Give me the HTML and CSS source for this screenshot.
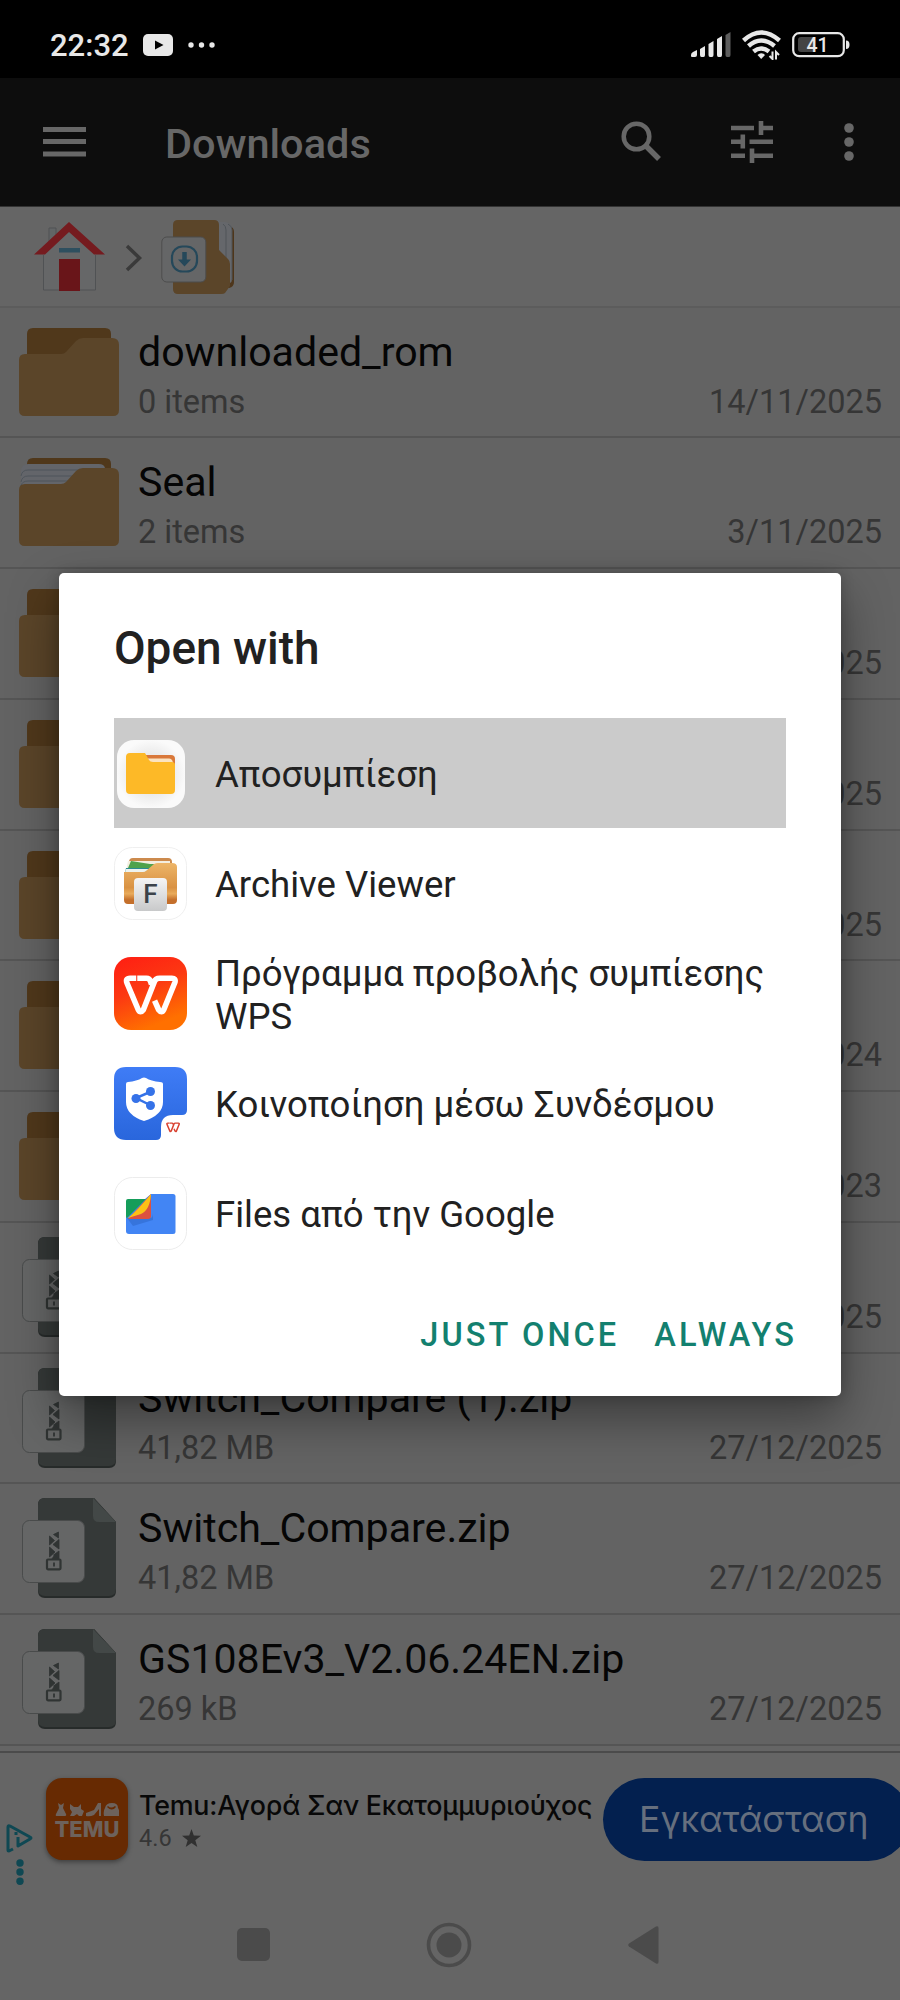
FILE: index.html
```
<!DOCTYPE html>
<html lang="el">
<head>
    <meta charset="UTF-8">
    <meta name="viewport" content="width=device-width, initial-scale=1.0">
    <title>Downloads</title>
    <link rel="stylesheet" href="styles.css">
</head>
<body>
    <!-- Shared icons -->
    <svg class="defs" width="0" height="0">
        <symbol id="folder" viewBox="0 0 100 88">
            <path d="M8 30V6q0-6 6-6h72q6 0 6 6v20z" fill="#50381b"/>
            <path d="M0 32q0-6 6-6h36q3 0 5-2l10-11q3-3 7-3h29q7 0 7 7v65q0 6-6 6H6q-6 0-6-6z" fill="#5b4529"/>
        </symbol>
        <symbol id="folder-full" viewBox="0 0 100 88">
            <path d="M8 30V6q0-6 6-6h72q6 0 6 6v20z" fill="#50381b"/>
            <path d="M2 30V14q0-8 7-8h71q5 0 6 4v22z" fill="#63656a"/>
            <path d="M2 18q1-6 7-6h62M2 24q1-6 7-6h52M2 28q1-5 7-5h46" fill="none" stroke="#4f555b" stroke-width="1"/>
            <path d="M0 32q0-6 6-6h36q3 0 5-2l10-11q3-3 7-3h29q7 0 7 7v65q0 6-6 6H6q-6 0-6-6z" fill="#5b4529"/>
        </symbol>
        <symbol id="zip" viewBox="0 0 94 100">
            <path d="M16 7q0-7 7-7h49l22 24v69q0 7-7 7H23q-7 0-7-7z" fill="#272b2a"/>
            <path d="M16 7q0-7 7-7h49l22 24v67q0 7-7 7H23q-7 0-7-7z" fill="#353938"/>
            <path d="M71 0l23 24H77q-6 0-6-6z" fill="#434847"/>
            <rect x=".5" y="22.500" width="62" height="62" rx="7" fill="#656666" stroke="#494b4b"/>
            <g fill="#303433" stroke="#303433" stroke-width=".8">
                <path d="M31.500 36.500l5-2.500v6zM27.500 38l5 4.500-5 4.500zM37 41.500v9.500l-6-4.500zM27.500 49l5.500 5-5.500 5zM37 53v8l-5.500-4zM29.500 61.500l3.500-5 4 5z"/>
            </g>
            <rect x="25" y="61.500" width="13.500" height="9.800" rx="1" fill="none" stroke="#303433" stroke-width="2.200"/>
            <path d="M32 64.500v4" stroke="#303433" stroke-width="1.800"/>
        </symbol>
        <symbol id="wps" viewBox="0 0 54 40">
            <path d="M13 3H7Q2 3 4 8l11 26q2 4 5 0L31 6q1-3 5-3h12q4 0 3 4L40 34q-2 4-5 0l-4-9M14 3h9q3 0 4 3l1 3" fill="none" stroke="currentColor" stroke-width="5.500" stroke-linejoin="round"/>
        </symbol>
    </svg>

    <div class="screen">
        <div class="status-bar">
            <span class="time">22:32</span>
            <svg class="youtube" width="30" height="22" viewBox="0 0 30 22"><rect width="30" height="22" rx="5" fill="#e8e8e8"/><path d="M12 6.500l8.500 4.500-8.500 4.500z" fill="#000"/></svg>
            <svg width="28" height="6" viewBox="0 0 28 6" fill="#e8e8e8"><circle cx="3" cy="3" r="2.700"/><circle cx="13.500" cy="3" r="2.700"/><circle cx="24" cy="3" r="2.700"/></svg>
            <div class="status-right">
                <svg width="40" height="26" viewBox="0 0 40 26" fill="#e8e8e8">
                    <path d="M0 23q0-2 2-3l4-2v5q0 2-2 2H1q-1 0-1-1zM9 17l5-3v9q0 2-1.500 2h-2Q9 25 9 23zM17.500 12l5-3v14q0 2-1.500 2h-2q-1.500 0-1.500-2zM26 7l5-3v19q0 2-1.500 2h-2Q26 25 26 23z"/>
                    <path d="M34.500 3l5-3v23q0 2-1.500 2h-2q-1.500 0-1.500-2z" fill="#5c5c5c"/>
                </svg>
                <svg class="wifi" width="39" height="30" viewBox="0 0 39 30" fill="none" stroke="#e8e8e8" stroke-width="4.500">
                    <path d="M1.500 10.500q17.500-16 36 0M6.500 16q12.500-11 26 0M11.500 21.500q7.500-6 15.500 0"/>
                    <path d="M15.500 25q3.500-3.500 7.500 0l-3.800 4z" fill="#e8e8e8" stroke="none"/>
                    <path d="M30.500 21.500v7.500l-3-3M34 29.500V22l3 3" stroke-width="2"/>
                </svg>
                <svg width="58" height="26" viewBox="0 0 58 26">
                    <rect x="1.200" y="1.200" width="50.600" height="23" rx="6" fill="none" stroke="#e8e8e8" stroke-width="2.200"/>
                    <path d="M6 8q0-3 3-3h14v15H9q-3 0-3-3z" fill="#444"/>
                    <path d="M54 8.500q3.500 0 3.500 4.200T54 17z" fill="#e8e8e8"/>
                    <text class="battery" x="25.500" y="19.800" text-anchor="middle">41</text>
                </svg>
            </div>
        </div>

        <div class="app-bar">
            <svg class="menu" width="43" height="30" viewBox="0 0 43 30" fill="#676767"><path d="M0 0h43v5H0zM0 12h43v5H0zM0 24.500h43v5H0z"/></svg>
            <h1>Downloads</h1>
            <svg class="search" width="42" height="42" viewBox="0 0 42 42" fill="none" stroke="#676767"><circle cx="15.500" cy="15.500" r="12.800" stroke-width="4.500"/><path d="M25.500 25.500L38 38" stroke-width="5.500"/></svg>
            <svg class="tune" width="42" height="42" viewBox="0 0 42 42" fill="none" stroke="#676767" stroke-width="4.600"><path d="M0 7h23M28 7h14M30 0v14M0 20.800h14M18.500 20.800H42M11.800 13.500v14M0 34.700h14M21 34.700h21M21 27.500v14.500"/></svg>
            <svg class="more" width="10" height="38" viewBox="0 0 10 38" fill="#676767"><circle cx="5" cy="5" r="4.800"/><circle cx="5" cy="19" r="4.800"/><circle cx="5" cy="33" r="4.800"/></svg>
        </div>

        <div class="breadcrumb">
            <svg class="home" width="71" height="70" viewBox="0 0 71 70">
                <path d="M15 26V6h7v14" fill="#626566" stroke="#515355"/>
                <path d="M9 32L35 8l27 24v36H9z" fill="#666768"/>
                <path d="M9.500 33v35h52V33" fill="none" stroke="#505254"/>
                <path d="M0 32.500L35 0l36 32.500H60L35 10 11 32.500z" fill="#751b1f"/>
                <path d="M25 26h21v4.500H25z" fill="#2e4f5f"/>
                <path d="M25 37h21v32H25z" fill="#691519"/>
            </svg>
            <svg class="chevron" width="18" height="28" viewBox="0 0 18 28" fill="none" stroke="#3a3a3a" stroke-width="3.500"><path d="M2 2l12.500 12L2 26"/></svg>
            <svg width="74" height="74" viewBox="0 0 74 74">
                <path d="M56 6h12q5 1 5 6v50q0 5-5 6H56z" fill="#4e361b"/>
                <path d="M55 2h9q7 1 7 7v50q0 3-2 4H55z" fill="#65676b"/>
                <path d="M62 4q3 2 3 6v30M67 4q4 2 4 6v50" fill="none" stroke="#505559"/>
                <path d="M12 5q0-5 5-5h36q5 0 5 5v25l9 9q2 2 2 5v22l-5 7q-1 1-4 1H17q-5 0-5-5z" fill="#5b4529"/>
                <rect x=".8" y="17" width="44" height="45" rx="5" fill="#656667" stroke="#4d4d4d"/>
                <rect x="11" y="26.500" width="25" height="25" rx="10.500" fill="none" stroke="#25485a" stroke-width="2.200"/>
                <path d="M23.500 32v11" stroke="#25485a" stroke-width="4.500"/><path d="M17 39.500l6.500 7 6.500-7z" fill="#25485a"/>
            </svg>
        </div>

        <div class="file-list">
            <div class="row">
                <svg class="icon-folder"><use href="#folder"/></svg>
                <div class="info"><p class="name">downloaded_rom</p><p class="meta"><span>0 items</span><span>14/11/2025</span></p></div>
            </div>
            <div class="row">
                <svg class="icon-folder"><use href="#folder-full"/></svg>
                <div class="info"><p class="name">Seal</p><p class="meta"><span>2 items</span><span>3/11/2025</span></p></div>
            </div>
            <div class="row">
                <svg class="icon-folder"><use href="#folder"/></svg>
                <div class="info"><p class="name"></p><p class="meta"><span></span><span>2025</span></p></div>
            </div>
            <div class="row">
                <svg class="icon-folder"><use href="#folder"/></svg>
                <div class="info"><p class="name"></p><p class="meta"><span></span><span>2025</span></p></div>
            </div>
            <div class="row">
                <svg class="icon-folder"><use href="#folder"/></svg>
                <div class="info"><p class="name"></p><p class="meta"><span></span><span>2025</span></p></div>
            </div>
            <div class="row">
                <svg class="icon-folder"><use href="#folder"/></svg>
                <div class="info"><p class="name"></p><p class="meta"><span></span><span>2024</span></p></div>
            </div>
            <div class="row">
                <svg class="icon-folder"><use href="#folder"/></svg>
                <div class="info"><p class="name"></p><p class="meta"><span></span><span>2023</span></p></div>
            </div>
            <div class="row">
                <svg class="icon-zip"><use href="#zip"/></svg>
                <div class="info"><p class="name"></p><p class="meta"><span></span><span>2025</span></p></div>
            </div>
            <div class="row">
                <svg class="icon-zip"><use href="#zip"/></svg>
                <div class="info"><p class="name">Switch_Compare (1).zip</p><p class="meta"><span>41,82 MB</span><span>27/12/2025</span></p></div>
            </div>
            <div class="row">
                <svg class="icon-zip"><use href="#zip"/></svg>
                <div class="info"><p class="name">Switch_Compare.zip</p><p class="meta"><span>41,82 MB</span><span>27/12/2025</span></p></div>
            </div>
            <div class="row">
                <svg class="icon-zip"><use href="#zip"/></svg>
                <div class="info"><p class="name">GS108Ev3_V2.06.24EN.zip</p><p class="meta"><span>269 kB</span><span>27/12/2025</span></p></div>
            </div>
        </div>

        <div class="ad">
            <div class="ad-choices">
                <svg width="27" height="29" viewBox="0 0 27 29" fill="none" stroke="#0f4853" stroke-width="3"><path d="M7 25l-4 2q-1 0-1-1V3q0-2 2-1l20 11q2 1 0 2L12 22v-9" stroke-linejoin="round"/><path d="M10 8v3" /></svg>
                <svg width="8" height="27" viewBox="0 0 8 27" fill="#0f4853"><circle cx="4" cy="4" r="3.700"/><circle cx="4" cy="13" r="3.700"/><circle cx="4" cy="22.300" r="3.700"/></svg>
            </div>
            <div class="temu">
                <svg width="64" height="14" viewBox="0 0 64 14" fill="#6d625c">
                    <path d="M3 0l3 2 3-2-1 5 3 6q1 2-2 2H2q-2 0-1-2l3-6z"/>
                    <path d="M15 1l4 3h4l3-3v5l3 2-2 5h-3l-2-2-3 2h-4l2-4-2-3z"/>
                    <path d="M31 10l8-3 4-7h3v13h-2V6l-5 6q-4 2-8 1z"/>
                    <path fill-rule="evenodd" d="M49 13q-1-5 1-8 1-5 7-5t6 5q2 3 1 8zM52 4q5 5 9 0l-1-1q-4 3-7 0z"/>
                </svg>
                <span>TEMU</span>
            </div>
            <div class="ad-text">
                <p class="ad-title">Temu:Αγορά Σαν Εκατομμυριούχος</p>
                <p class="ad-rating">4.6 <svg width="19" height="18" viewBox="0 0 19 18" fill="#303030"><path d="M9.500 0l2.300 6.600 7.200.2-5.700 4.400 2 6.800-5.800-4-5.800 4 2-6.800L0 6.800l7.200-.2z"/></svg></p>
            </div>
            <div class="install">Εγκατάσταση</div>
        </div>

        <div class="nav-bar">
            <svg width="33" height="33" viewBox="0 0 33 33"><rect width="33" height="33" rx="5" fill="#4b4b4b"/></svg>
            <svg width="46" height="46" viewBox="0 0 46 46"><circle cx="23" cy="23" r="20.500" fill="none" stroke="#4b4b4b" stroke-width="3.600"/><circle cx="23" cy="23" r="12.500" fill="#4b4b4b"/></svg>
            <svg width="31" height="38" viewBox="0 0 31 38"><path d="M1 17.500L28 .5q2.500-1 2.500 1.500v34q0 2.500-2.500 1.500L1 20.500q-1.500-1.500 0-3z" fill="#4b4b4b"/></svg>
        </div>

        <!-- Open with dialog -->
        <div class="dialog">
            <h2>Open with</h2>
            <div class="apps">
                <div class="app selected">
                    <svg width="73" height="73" viewBox="0 0 73 73">
                        <defs><radialGradient id="tile"><stop offset=".6" stop-color="#ebebeb"/><stop offset="1" stop-color="#fafafa"/></radialGradient></defs>
                        <rect x="3" y="3" width="68" height="68" rx="17" fill="url(#tile)"/>
                        <path d="M30 18h27q4 0 4 4v12H30z" fill="#d9783a"/>
                        <path d="M33 21.500h22q3 0 4 4v8H36z" fill="#fbe3c0"/>
                        <path d="M12 20q0-4 4-4h15l4 7q1 2 4 2h19q3 0 3 3v25q0 4-4 4H16q-4 0-4-4z" fill="#fdb927"/>
                    </svg>
                    <span>Αποσυμπίεση</span>
                </div>
                <div class="app">
                    <svg width="73" height="73" viewBox="0 0 73 73">
                        <defs>
                            <linearGradient id="fold" x2="0" y2="1"><stop stop-color="#edb568"/><stop offset=".6" stop-color="#d99243"/><stop offset=".75" stop-color="#e9ab5b"/><stop offset=".9" stop-color="#c46f2b"/></linearGradient>
                            <linearGradient id="key" x2="0" y2="1"><stop stop-color="#f5f5f5"/><stop offset="1" stop-color="#c8c9ca"/></linearGradient>
                        </defs>
                        <rect x=".5" y=".5" width="72" height="72" rx="18" fill="#fff" stroke="#efefef"/>
                        <path d="M15 15q0-4 4-4h35q4 0 4 4v9H12z" fill="#cc8a4d"/>
                        <path d="M14 14h42v10H12z" fill="#f3eee0"/>
                        <path d="M17 14l19 3h10L30 28H11z" fill="#4fa24c"/>
                        <path d="M12 21h24l-6 5H11z" fill="#2c8b93"/><path d="M12 22h23l-5 4H11z" fill="#eef3ef"/>
                        <path d="M10 25h19q2 0 3-1l8-7q2-1 4-1h14q5 0 5 4v33q0 4-4 4H14q-4 0-4-4z" fill="url(#fold)"/>
                        <rect x="20" y="31" width="33" height="33" rx="4" fill="url(#key)"/>
                        <text class="key-f" x="36.500" y="55.500" text-anchor="middle">F</text>
                    </svg>
                    <span>Archive Viewer</span>
                </div>
                <div class="app">
                    <svg class="white" width="73" height="73" viewBox="0 0 73 73">
                        <defs><linearGradient id="red" x2=".4" y2="1"><stop stop-color="#ff1d13"/><stop offset=".5" stop-color="#fc3812"/><stop offset="1" stop-color="#ff7000"/></linearGradient></defs>
                        <rect width="73" height="73" rx="17" fill="url(#red)"/>
                        <use href="#wps" x="9" y="18" width="55" height="41"/>
                    </svg>
                    <span>Πρόγραμμα προβολής συμπίεσης WPS</span>
                </div>
                <div class="app">
                    <svg class="red" width="73" height="73" viewBox="0 0 73 73">
                        <defs><linearGradient id="blue" x2="0" y2="1"><stop stop-color="#3f7cf6"/><stop offset="1" stop-color="#2966dc"/></linearGradient></defs>
                        <path d="M12 0h49q12 0 12 12v31q0 5-5 5h-9q-12 0-12 12v8q0 5-5 5H12Q0 73 0 61V12Q0 0 12 0z" fill="url(#blue)"/>
                        <path d="M12 17q0-2 2-2 9-1 14-4 2-1 4 0 5 3 14 4 3 0 3 2v18q0 13-19 19-18-6-18-19z" fill="#fff"/>
                        <path d="M36 25l-14 6 14 7" fill="none" stroke="#3572e8" stroke-width="2.500"/>
                        <g fill="#3572e8"><circle cx="36.500" cy="24.500" r="4.500"/><circle cx="22" cy="31.500" r="4.500"/><circle cx="36.500" cy="38.500" r="4.500"/></g>
                        <use href="#wps" x="52" y="55" width="14" height="11"/>
                    </svg>
                    <span>Κοινοποίηση μέσω Συνδέσμου</span>
                </div>
                <div class="app">
                    <svg width="73" height="73" viewBox="0 0 73 73">
                        <rect x=".5" y=".5" width="72" height="72" rx="18" fill="#fff" stroke="#ececec"/>
                        <path d="M37 17h22q2.500 0 2.500 2.500v35q0 2.500-2.500 2.500H15q-3 0-3-3V38z" fill="#4285f4"/>
                        <path d="M13 41h23q3 0 3-5v7L19 49z" fill="#3674dc"/>
                        <path d="M12 24q0-2 2-2h18l-19 19q-1 0-1-2z" fill="#159d5a"/>
                        <path d="M37 17v22q0 3-3 3H14z" fill="#dc5140"/>
                        <path d="M37 17q-1 16-10 20l-13 4q9-7 23-24z" fill="#fbc116"/>
                    </svg>
                    <span>Files από την Google</span>
                </div>
            </div>
            <div class="actions">
                <span>JUST ONCE</span>
                <span>ALWAYS</span>
            </div>
        </div>
    </div>
</body>
</html>
```
FILE: styles.css
```
* {
    margin: 0;
    padding: 0;
    box-sizing: border-box;
}

body {
    font-family: Roboto, "Noto Sans", sans-serif;
    background-color: #656565;
}

svg {
    display: block;
    flex-shrink: 0;
}

.defs {
    position: absolute;
}

.screen {
    position: relative;
    width: 900px;
    height: 2000px;
    overflow: hidden;
    background-color: #656565;
}

/* Status bar */
.status-bar {
    display: flex;
    align-items: center;
    height: 78px;
    padding: 12px 50px 0 50px;
    background-color: #000;
    color: #e8e8e8;
}

.time {
    width: 93px;
    padding-top: 1px;
    font-size: 31px;
    font-weight: 500;
}

.youtube {
    margin-right: 15px;
}

.status-right {
    display: flex;
    align-items: center;
    gap: 11px;
    margin-left: auto;
}

.battery {
    font-size: 19.5px;
    font-weight: 500;
    fill: #e8e8e8;
}

/* App bar */
.app-bar {
    display: flex;
    align-items: center;
    height: 129px;
    padding: 0 46px 0 43px;
    background-color: #0d0d0d;
    border-bottom: 1px solid #333;
}

.app-bar h1 {
    flex: 1;
    margin-left: 79px;
    padding-top: 2px;
    font-size: 41.5px;
    font-weight: 500;
    line-height: 49px;
    color: #676767;
}

.search {
    margin-right: 68px;
}

.tune {
    margin-right: 71px;
}

/* Breadcrumb */
.breadcrumb {
    display: flex;
    align-items: center;
    height: 101px;
    padding: 1px 0 0 34px;
    border-bottom: 2px solid #5c5c5c;
}

.chevron {
    margin: 2px 18px 0 20px;
}

/* File list */
.row {
    display: flex;
    height: 130.75px;
    border-bottom: 2px solid #555;
    background-color: #636363;
}

.row:first-child {
    margin-top: -0.5px;
}

.icon-folder {
    width: 100px;
    height: 88px;
    margin: 20px 19px 0 19px;
}

.icon-zip {
    width: 94px;
    height: 100px;
    margin: 14px 22px 0 22px;
}

.info {
    flex: 1;
    padding: 20px 18px 0 0;
}

.name {
    height: 48px;
    margin-bottom: 7px;
    font-size: 41.1px;
    line-height: 48px;
    color: #050505;
}

.meta {
    display: flex;
    justify-content: space-between;
    font-size: 32.5px;
    line-height: 38px;
    color: #363636;
}

/* Ad banner */
.ad {
    display: flex;
    height: 138px;
    margin-top: 5px;
    border-top: 2px solid #4b4b4b;
}

.ad-choices {
    flex-shrink: 0;
    width: 46px;
    padding: 71px 0 0 6px;
}

.ad-choices svg + svg {
    margin: 6px 0 0 10px;
}

.temu {
    display: flex;
    flex-direction: column;
    flex-shrink: 0;
    align-items: center;
    width: 82px;
    height: 82px;
    margin: 25px 11px 0 0;
    padding-top: 25px;
    border-radius: 16px;
    background-color: #672a02;
    box-shadow: 0 2px 5px rgba(0, 0, 0, 0.4);
}

.temu span {
    font-family: Inter, sans-serif;
    font-size: 22px;
    font-weight: 800;
    line-height: 24px;
    color: #6d625c;
}

.ad-text {
    flex-shrink: 0;
    width: 464px;
    padding-top: 35px;
    white-space: nowrap;
}

.ad-title {
    font-family: Inter, "Noto Sans", sans-serif;
    font-size: 26.8px;
    font-weight: 500;
    line-height: 34px;
    letter-spacing: -0.2px;
    color: #080808;
}

.ad-rating {
    display: flex;
    align-items: center;
    gap: 10px;
    font-size: 23.5px;
    line-height: 32px;
    color: #363636;
}

.install {
    flex-shrink: 0;
    width: 307px;
    height: 83px;
    margin-top: 25px;
    padding-left: 36px;
    border-radius: 42px;
    background-color: #03204f;
    font-family: Inter, "Noto Sans", sans-serif;
    font-size: 35.6px;
    line-height: 83px;
    color: #666f7e;
    white-space: nowrap;
}

/* System navigation */
.nav-bar {
    display: flex;
    align-items: center;
    justify-content: space-between;
    height: 112px;
    padding: 0 241px 0 237px;
}

/* Dialog */
.dialog {
    position: absolute;
    left: 59px;
    top: 573px;
    width: 782px;
    height: 823px;
    padding: 47px 55px 0;
    border-radius: 5px;
    background-color: #fff;
    box-shadow: 0 22px 50px rgba(0, 0, 0, 0.4), 0 0 14px rgba(0, 0, 0, 0.2);
    color: #212121;
}

.dialog h2 {
    height: 98px;
    font-size: 45.9px;
    font-weight: 500;
    line-height: 57px;
}

.app {
    display: flex;
    align-items: center;
    gap: 28px;
    height: 110px;
    font-size: 36.55px;
    line-height: 43px;
}

.app span {
    padding-top: 3px;
}

.selected {
    background-color: #cbcbcb;
}

.white {
    color: #fff;
}

.red {
    color: #d8402f;
}

.key-f {
    font-size: 26px;
    font-weight: 500;
    fill: #3c434a;
}

.actions {
    display: flex;
    justify-content: flex-end;
    gap: 35px;
    margin: 48px -11px 0 0;
    font-size: 32.5px;
    font-weight: 500;
    line-height: 38px;
    letter-spacing: 3.1px;
    color: #13806f;
}
```
